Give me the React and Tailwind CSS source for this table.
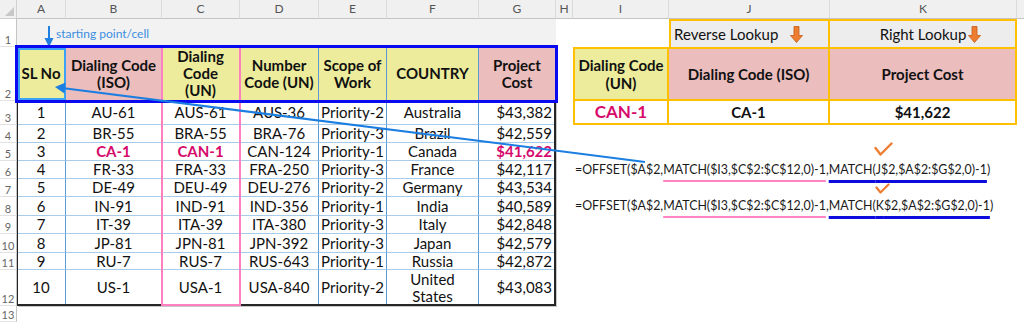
import React from 'react'

// grid placement classes, written out so Tailwind picks them up
const CS = ['col-start-1', 'col-start-2', 'col-start-3', 'col-start-4', 'col-start-5', 'col-start-6', 'col-start-7', 'col-start-8', 'col-start-9', 'col-start-10', 'col-start-11', 'col-start-12', 'col-start-13']
const RS = ['row-start-1', 'row-start-2', 'row-start-3', 'row-start-4', 'row-start-5', 'row-start-6', 'row-start-7', 'row-start-8', 'row-start-9', 'row-start-10', 'row-start-11', 'row-start-12', 'row-start-13', 'row-start-14']

const LETTERS = ['A', 'B', 'C', 'D', 'E', 'F', 'G', 'H', 'I', 'J', 'K']

const ROWS = [
  ['1', 'AU-61', 'AUS-61', 'AUS-36', 'Priority-2', 'Australia', '$43,382'],
  ['2', 'BR-55', 'BRA-55', 'BRA-76', 'Priority-3', 'Brazil', '$42,559'],
  ['3', 'CA-1', 'CAN-1', 'CAN-124', 'Priority-1', 'Canada', '$41,622'],
  ['4', 'FR-33', 'FRA-33', 'FRA-250', 'Priority-3', 'France', '$42,117'],
  ['5', 'DE-49', 'DEU-49', 'DEU-276', 'Priority-2', 'Germany', '$43,534'],
  ['6', 'IN-91', 'IND-91', 'IND-356', 'Priority-1', 'India', '$40,589'],
  ['7', 'IT-39', 'ITA-39', 'ITA-380', 'Priority-3', 'Italy', '$42,848'],
  ['8', 'JP-81', 'JPN-81', 'JPN-392', 'Priority-3', 'Japan', '$42,579'],
  ['9', 'RU-7', 'RUS-7', 'RUS-643', 'Priority-1', 'Russia', '$42,872'],
  ['10', 'US-1', 'USA-1', 'USA-840', 'Priority-2', 'United States', '$43,083'],
]

const HEADERS = [
  ['SL No', 'bg-[#ecec9c]'],
  ['Dialing Code (ISO)', 'bg-[#ebbdbd]'],
  ['Dialing Code (UN)', 'bg-[#ecec9c] px-[14px]'],
  ['Number Code (UN)', 'bg-[#ecec9c]'],
  ['Scope of Work', 'bg-[#ecec9c]'],
  ['COUNTRY', 'bg-[#ecec9c]'],
  ['Project Cost', 'bg-[#ebbdbd] px-[10px]'],
]

const Cell = ({ c, r, className = '', children }) => (
  <div className={`${CS[c]} ${RS[r]} ${className}`}>{children}</div>
)

const DownArrow = () => (
  <svg width="13" height="17" viewBox="0 0 13 17">
    <path d="M4 0.5h5v9h3.5L6.5 16.5 0.5 9.5H4z" fill="#ed7d31" stroke="#c55a11" strokeWidth="0.8" />
  </svg>
)

const Check = ({ big }) => (
  <svg
    className={big ? 'absolute left-[-2px] top-[-20px]' : 'absolute left-[-1px] top-[-15px]'}
    width={big ? 19 : 15}
    height={big ? 15 : 11}
    viewBox={big ? '0 0 19 15' : '0 0 15 11'}
  >
    {big ? (
      <polyline points="1.5,6 6.5,12.5 17.5,1.5" fill="none" stroke="#ed7d31" strokeWidth="2.4" strokeLinecap="round" strokeLinejoin="round" />
    ) : (
      <polyline points="1.5,4.5 5.5,9.5 13.5,1.5" fill="none" stroke="#ed7d31" strokeWidth="2.2" strokeLinecap="round" strokeLinejoin="round" />
    )}
  </svg>
)

const Formula = ({ r, col, big }) => (
  <Cell c={9} r={r} className="col-span-4 flex items-center whitespace-nowrap pl-[2px] text-[12.4px] text-[#1a1a1a]">
    =OFFSET($A$2,
    <span className="underline decoration-[#ff85c4] decoration-2 underline-offset-[6px]">MATCH($I3,$C$2:$C$12,0)-1</span>,
    <span className="underline decoration-[#0c0cdc] decoration-[2.5px] underline-offset-[6px]">
      MATCH(<span className="relative">{col}<Check big={big} /></span>$2,$A$2:$G$2,0)-1
    </span>)
  </Cell>
)

export default function App() {
  const grid = 'border-r border-b border-r-[#5b9bd5] border-b-[#a9cbea]'
  const orange = 'border-[#ffc000]'

  return (
    <div className="relative w-[1024px] h-[322px] overflow-hidden bg-white font-['Lato','Noto_Sans',sans-serif] text-[#111]">
      <div className="grid grid-cols-[17px_49px_96px_78px_79px_68px_92px_77px_17px_96px_161px_187px_1fr] grid-rows-[19px_28px_54px_24px_18px_18px_18px_18px_19px_18px_19px_17px_36px_16px]">
        {/* column letters */}
        <Cell c={0} r={0} className="relative border-r border-b border-[#d0d0d0] bg-[#f0f0f0]">
          <svg className="absolute right-[2px] bottom-[2px]" width="9" height="9" viewBox="0 0 9 9">
            <polygon points="9,0 9,9 0,9" fill="#c8c8c8" />
          </svg>
        </Cell>
        {LETTERS.map((l, i) => (
          <Cell key={l} c={i + 1} r={0} className="flex items-center justify-center border-r border-b border-r-[#dadada] border-b-[#c4c4c4] bg-[#f0f0f0] text-[12px] text-[#555]">
            {l}
          </Cell>
        ))}
        <Cell c={12} r={0} className="border-b border-[#c4c4c4] bg-[#f0f0f0]" />

        {/* row numbers */}
        {Array.from({ length: 13 }, (_, i) => (
          <Cell key={i} c={0} r={i + 1} className="flex items-end justify-center border-r border-b border-r-[#c4c4c4] border-b-[#e2e2e2] pb-[1px] text-[11px] leading-none text-[#666]">
            {i + 1}
          </Cell>
        ))}

        {/* row 1 */}
        <Cell c={1} r={1} className="col-span-7 flex items-end bg-[#f2f2f2] pl-[27px]">
          <svg className="shrink-0" width="10" height="21" viewBox="0 0 10 21">
            <line x1="5" y1="0" x2="5" y2="14" stroke="#1f7fe0" strokeWidth="2" />
            <polygon points="0.5,12 9.5,12 5,21" fill="#1f7fe0" />
          </svg>
          <span className="mb-[7px] ml-[2px] text-[12px] leading-none text-[#3a8ee0]">starting point/cell</span>
        </Cell>
        <Cell c={10} r={1} className={`flex items-center gap-[12px] border-l-2 border-t-2 border-r-2 ${orange} bg-[#ededed] pl-[3px] text-[15px]`}>
          <span>Reverse Lookup</span>
          <DownArrow />
        </Cell>
        <Cell c={11} r={1} className={`flex items-center justify-center gap-[2px] border-t-2 border-r-2 ${orange} bg-[#ededed] pl-[16px] text-[15px]`}>
          <span>Right Lookup</span>
          <DownArrow />
        </Cell>

        {/* row 2 headers */}
        {HEADERS.map(([t, bg], i) => (
          <Cell key={t} c={i + 1} r={2} className={`flex items-center justify-center text-center ${grid} ${bg} text-[15px] font-bold leading-[17px]`}>
            {t}
          </Cell>
        ))}
        <Cell c={9} r={2} className={`flex items-center justify-center border-2 ${orange} bg-[#ecec9c] text-center text-[15px] font-bold leading-[18px]`}>
          Dialing Code (UN)
        </Cell>
        <Cell c={10} r={2} className={`flex items-center justify-center border-t-2 border-r-2 border-b-2 ${orange} bg-[#ebbdbd] text-[15px] font-bold`}>
          Dialing Code (ISO)
        </Cell>
        <Cell c={11} r={2} className={`flex items-center justify-center border-t-2 border-r-2 border-b-2 ${orange} bg-[#ebbdbd] text-[15px] font-bold`}>
          Project Cost
        </Cell>

        {/* row 3 lookup results */}
        <Cell c={9} r={3} className={`flex items-center justify-center border-l-2 border-r-2 border-b-2 ${orange} text-[17px] font-bold text-[#d60a6b]`}>
          CAN-1
        </Cell>
        <Cell c={10} r={3} className={`flex items-center justify-center border-r-2 border-b-2 ${orange} text-[15px] font-bold`}>
          CA-1
        </Cell>
        <Cell c={11} r={3} className={`flex items-center justify-center border-r-2 border-b-2 ${orange} text-[15px] font-bold`}>
          $41,622
        </Cell>

        {/* data rows */}
        {ROWS.map((row, ri) =>
          row.map((v, ci) => {
            const hot = ri === 2 && (ci === 1 || ci === 2 || ci === 6)
            const align = ci === 6 ? 'justify-end pr-[3px]' : 'justify-center text-center'
            return (
              <Cell
                key={`${ri}-${ci}`}
                c={ci + 1}
                r={ri + 3}
                className={`flex items-center ${align} ${grid} text-[15px] leading-[17px] ${ci === 5 && ri === 9 ? 'px-[18px]' : ''} ${hot ? 'font-bold text-[#d60a6b]' : ''}`}
              >
                {v}
              </Cell>
            )
          })
        )}

        {/* formulas */}
        <Formula r={6} col="J" big />
        <Formula r={8} col="K" />

        {/* borders drawn over the table */}
        <div className="col-start-2 col-end-9 row-start-4 row-end-14 pointer-events-none border-l border-r-2 border-b-2 border-[#262626] shadow-[1px_1px_0_#c8c8c8]" />
        <div className="col-start-4 col-end-5 row-start-3 row-end-14 pointer-events-none -mx-[1px] border-x-2 border-b-2 border-[#ff80c0]" />
        <div className="col-start-2 col-end-9 row-start-3 row-end-4 pointer-events-none -m-[2px] border-[3px] border-[#0a0af0]" />
        <div className="col-start-2 col-end-3 row-start-3 row-end-4 pointer-events-none my-[1px] ml-[1px] border-2 border-[#3ba2f5]" />
      </div>

      {/* connector from the formula to the starting cell */}
      <svg className="pointer-events-none absolute inset-0" width="1024" height="322" viewBox="0 0 1024 322">
        <line x1="645" y1="162" x2="62" y2="88" stroke="#1c7ee0" strokeWidth="2" />
        <polygon points="55,87 65.6,82.6 64.4,93.4" fill="#1c7ee0" />
      </svg>
    </div>
  )
}
